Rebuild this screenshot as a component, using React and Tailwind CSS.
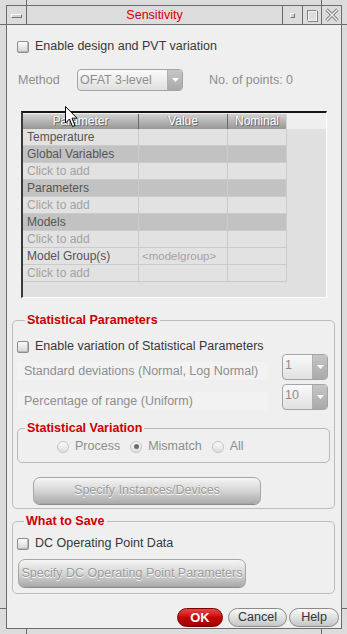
// Sensitivity dialog

import React from "react";

const disabled = "text-[#8e8e8e]";

function Checkbox() {
    return (
        <div className="w-[12px] h-[12px] shrink-0 rounded-[2px] border border-[#8c8c8c] bg-linear-to-b from-[#fdfdfd] to-[#d4d4d4] shadow-[inset_-1px_-1px_0_#b8b8b8]" />
    )
}

function Radio({ on }) {
    return (
        <div className="w-[12px] h-[12px] shrink-0 rounded-full border border-[#c4c4c4] bg-linear-to-b from-[#fbfbfb] to-[#dedede] flex items-center justify-center">
            {on && <div className="w-[5px] h-[5px] rounded-full bg-[#6c6c6c]" />}
        </div>
    )
}

function Tri() {
    return (
        <svg width="7" height="4" viewBox="0 0 7 4">
            <path d="M0 0 L7 0 L3.5 4 Z" fill="#ffffff" />
        </svg>
    )
}

function Combo({ text, w, h }) {
    return (
        <div className={`flex ${w} ${h} shrink-0 rounded-[4px] border border-[#a4a4a4] bg-linear-to-b from-[#fafafa] to-[#e0e0e0] overflow-hidden`}>
            <span className={`flex-1 pl-[2px] pt-[1px] ${disabled}`}>{text}</span>
            <span className="w-[15px] border-l border-[#b0b0b0] bg-linear-to-b from-[#c6c6c6] to-[#a9a9a9] flex items-center justify-center">
                <Tri />
            </span>
        </div>
    )
}

function GreyButton({ label, className }) {
    return (
        <div className={`flex items-center justify-center rounded-[7px] border border-[#a6a6a6] bg-linear-to-b from-[#f6f6f6] via-[#d6d6d6] to-[#acacac] shadow-[0_1px_0_#8c8c8c] whitespace-nowrap text-[#9a9a9a] [text-shadow:0_1px_0_#ffffff] ${className}`}>
            {label}
        </div>
    )
}

const rows = [
    { p: "Temperature", kind: "n" },
    { p: "Global Variables", kind: "g" },
    { p: "Click to add", kind: "a" },
    { p: "Parameters", kind: "g" },
    { p: "Click to add", kind: "a" },
    { p: "Models", kind: "g" },
    { p: "Click to add", kind: "a" },
    { p: "Model Group(s)", kind: "n", v: "<modelgroup>" },
    { p: "Click to add", kind: "a" },
]

function ParamTable() {
    return (
        <div className="ml-[14px] mt-[20px] w-[306px] h-[187px] shrink-0 border-t-2 border-l-2 border-t-[#151515] border-l-[#3a3a3a] border-r border-b border-r-white border-b-white flex flex-col text-[12px]">
            {/* header */}
            <div className="h-[16px] pt-[1px] bg-[#efefef] flex">
                {[["Parameter", "w-[116px] border-r border-[#6a6a6a]"], ["Value", "w-[89px] border-r border-[#6a6a6a]"], ["Nominal", "w-[59px] border-r border-[#d4d4d4]"]].map(([t, c]) => (
                    <div key={t} className={`${c} h-[15px] leading-[15px] text-center text-white bg-linear-to-b from-[#d2d2d2] to-[#979797] [text-shadow:1px_1px_0_#6a6a6a,-1px_0_0_#9a9a9a]`}>
                        {t}
                    </div>
                ))}
            </div>
            {/* body */}
            <div className="flex-1 bg-[#e0e0e0]">
                {rows.map((r, i) => {
                    const bg = r.kind === "g" ? "bg-[#c2c2c2]" : "bg-[#e2e2e2]"
                    const tc = r.kind === "a" ? "text-[#a2a2a2]" : "text-[#555555]"
                    return (
                        <div key={i} className={`flex h-[17px] w-[264px] ${bg}`}>
                            <div className={`w-[116px] border-r border-b border-[#cbcbcb] pl-[4px] leading-[16px] ${tc}`}>{r.p}</div>
                            <div className="w-[89px] border-r border-b border-[#cbcbcb] pl-[3px] leading-[16px] text-[#a2a2a2] text-[11.5px]">{r.v || ""}</div>
                            <div className="w-[59px] border-r border-b border-[#cbcbcb]" />
                        </div>
                    )
                })}
            </div>
        </div>
    )
}

function Legend({ children, ml }) {
    return (
        <legend className={`${ml} px-[2px] leading-[15px] font-bold text-[#cc0000]`}>{children}</legend>
    )
}

export default function App() {
    return (
        <div className="relative w-[347px] h-[634px] bg-[#dcdcdc] pt-[5px] pl-[6px] pr-[5px] pb-[5px] font-['Liberation_Sans',Arial,sans-serif] text-[12.5px] overflow-hidden">
            {/* frame corner ticks */}
            <div className="absolute left-[26px] top-0 w-px h-[5px] bg-[#6c6c6c]" />
            <div className="absolute left-[321px] top-0 w-px h-[5px] bg-[#6c6c6c]" />
            <div className="absolute left-[26px] bottom-0 w-px h-[5px] bg-[#6c6c6c]" />
            <div className="absolute left-[321px] bottom-0 w-px h-[5px] bg-[#6c6c6c]" />
            <div className="absolute left-0 top-[24px] w-[6px] h-px bg-[#6c6c6c]" />
            <div className="absolute right-0 top-[24px] w-[6px] h-px bg-[#6c6c6c]" />
            <div className="absolute left-0 top-[608px] w-[6px] h-px bg-[#6c6c6c]" />
            <div className="absolute right-0 top-[608px] w-[6px] h-px bg-[#6c6c6c]" />

            <div className="h-full border border-[#6c6c6c] flex flex-col">
                {/* title bar */}
                <div className="flex h-[19px] shrink-0 border-b border-[#6c6c6c] bg-[#dcdcdc]">
                    <div className="w-[20px] border-r border-[#6c6c6c] flex items-center justify-center pt-[1px]">
                        <div className="w-[11px] h-[4px] border-t border-l border-white border-b border-r border-b-[#777777] border-r-[#777777] bg-[#d0d0d0]" />
                    </div>
                    <div className="flex-1 text-center leading-[18px] text-[#d00000]">Sensitivity</div>
                    <div className="w-[20px] border-l border-[#6c6c6c] flex items-center justify-center pt-[1px]">
                        <div className="w-[5px] h-[5px] border border-t-white border-l-white border-b-[#777777] border-r-[#777777] bg-[#cfcfcf]" />
                    </div>
                    <div className="w-[19px] border-l border-[#6c6c6c] flex items-center justify-center">
                        <div className="w-[10px] h-[11px] border border-t-[#808080] border-l-[#808080] border-b-[#f4f4f4] border-r-[#f4f4f4] shadow-[1px_1px_0_#808080,inset_1px_1px_0_#f4f4f4]" />
                    </div>
                    <div className="w-[20px] border-l border-[#6c6c6c] flex items-center justify-center">
                        <svg width="14" height="14" viewBox="0 0 14 14">
                            <path d="M1.5 1.5 L12.5 12.5 M12.5 1.5 L1.5 12.5" stroke="#858585" strokeWidth="3.2" />
                            <path d="M1.5 1.5 L12.5 12.5 M12.5 1.5 L1.5 12.5" stroke="#f2f2f2" strokeWidth="1.2" />
                        </svg>
                    </div>
                </div>

                {/* client area */}
                <div className="flex-1 bg-[#efefef] flex flex-col">
                    <div className="mt-[15px] h-[13px] pl-[10px] flex items-center gap-[6px] text-[#383838]">
                        <Checkbox />
                        <span>Enable design and PVT variation</span>
                    </div>

                    <div className="mt-[16px] h-[22px] flex items-center">
                        <span className={`w-[70px] pl-[11px] ${disabled}`}>Method</span>
                        <Combo text="OFAT 3-level" w="w-[106px]" h="h-[22px]" />
                        <span className={`ml-[26px] ${disabled}`}>No. of points: 0</span>
                    </div>

                    <ParamTable />

                    {/* Statistical Parameters */}
                    <fieldset className="mt-[15px] ml-[5px] w-[323px] border border-[#bcbcbc] rounded-[5px] px-[4px] pb-[4px]">
                        <Legend ml="ml-[8px]">Statistical Parameters</Legend>
                        <div className="mt-[12px] h-[13px] flex items-center gap-[6px] text-[#383838]">
                            <Checkbox />
                            <span>Enable variation of Statistical Parameters</span>
                        </div>
                        <div className="mt-[1px] flex items-end">
                            <div className={`w-[251px] h-[18px] leading-[18px] pl-[7px] bg-[#f2f2f2] ${disabled}`}>Standard deviations (Normal, Log Normal)</div>
                            <div className="ml-[14px]">
                                <Combo text="1" w="w-[46px]" h="h-[26px]" />
                            </div>
                        </div>
                        <div className="mt-[4px] flex items-end">
                            <div className={`w-[251px] h-[18px] leading-[18px] pl-[7px] bg-[#f2f2f2] ${disabled}`}>Percentage of range (Uniform)</div>
                            <div className="ml-[14px]">
                                <Combo text="10" w="w-[46px]" h="h-[26px]" />
                            </div>
                        </div>

                        <fieldset className="mt-[11px] w-[313px] border border-[#b8b8b8] rounded-[5px] pb-[9px]">
                            <Legend ml="ml-[7px]">Statistical Variation</Legend>
                            <div className={`mt-[4px] h-[13px] pl-[39px] flex items-center ${disabled}`}>
                                <Radio />
                                <span className="ml-[6px]">Process</span>
                                <span className="ml-[10px]"><Radio on /></span>
                                <span className="ml-[6px]">Mismatch</span>
                                <span className="ml-[10px]"><Radio /></span>
                                <span className="ml-[6px]">All</span>
                            </div>
                        </fieldset>

                        <GreyButton label="Specify Instances/Devices" className="mt-[14px] ml-[16px] w-[228px] h-[27px]" />
                    </fieldset>

                    {/* What to Save */}
                    <fieldset className="mt-[5px] ml-[5px] w-[323px] border border-[#bcbcbc] rounded-[5px] px-[4px] pb-[6px]">
                        <Legend ml="ml-[7px]">What to Save</Legend>
                        <div className="mt-[8px] h-[13px] flex items-center gap-[6px] text-[#383838]">
                            <Checkbox />
                            <span>DC Operating Point Data</span>
                        </div>
                        <GreyButton label="Specify DC Operating Point Parameters" className="mt-[9px] ml-[1px] w-[228px] h-[28px]" />
                    </fieldset>

                    {/* dialog buttons */}
                    <div className="mt-[14px] h-[19px] flex justify-end pr-[2px]">
                        <div className="w-[46px] rounded-full border border-[#7a0000] bg-linear-to-b from-[#e94444] via-[#c40000] to-[#a00000] text-white font-bold text-[13px] flex items-center justify-center">
                            OK
                        </div>
                        <div className="ml-[5px] w-[59px] rounded-full border border-[#8a8a8a] bg-linear-to-b from-[#fafafa] to-[#c6c6c6] text-[#333333] flex items-center justify-center">
                            Cancel
                        </div>
                        <div className="ml-[2px] w-[50px] rounded-full border border-[#8a8a8a] bg-linear-to-b from-[#fafafa] to-[#c6c6c6] text-[#333333] flex items-center justify-center">
                            Help
                        </div>
                    </div>
                </div>
            </div>

            {/* mouse pointer */}
            <svg className="absolute left-[65px] top-[106px]" width="13" height="22" viewBox="0 0 13 22">
                <path d="M0.5 0.5 L0.5 17 L4.5 13 L7.5 20.5 L10 19.5 L7 12.2 L12 12.2 Z" fill="#ffffff" stroke="#000000" strokeWidth="1" strokeLinejoin="miter" />
            </svg>
        </div>
    )
}
